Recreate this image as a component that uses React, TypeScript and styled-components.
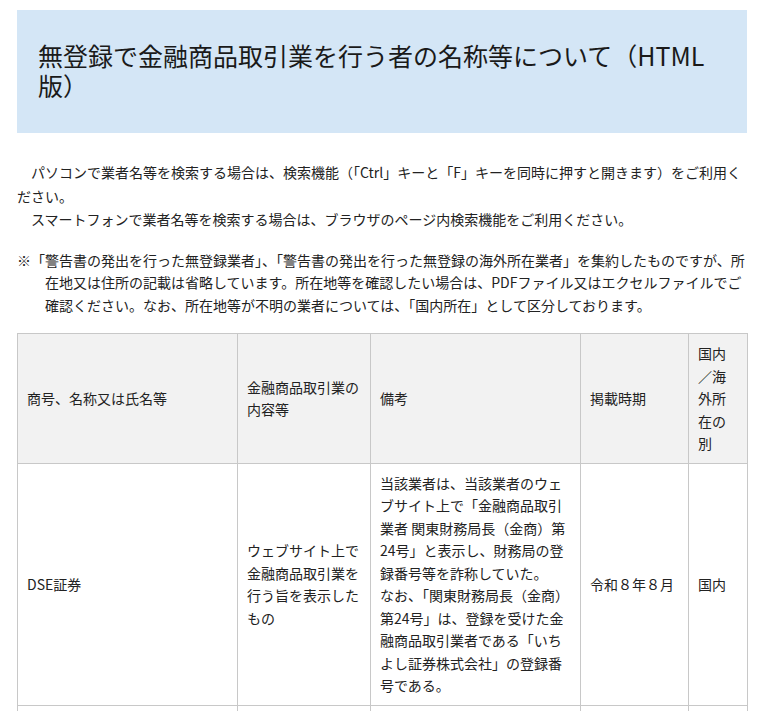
import React from "react";
import styled, { createGlobalStyle } from "styled-components";

const GlobalStyle = createGlobalStyle`
  html, body {
    margin: 0;
    padding: 0;
    background: #ffffff;
  }
  body {
    font-family: "Noto Sans CJK JP", "Liberation Sans", sans-serif;
    color: #222222;
    font-size: 14px;
  }
`;

const Page = styled.main`
  width: 730px;
  padding: 10px 24px 0 17px;
`;

const TitleBox = styled.h1`
  margin: 0;
  background: #d4e6f6;
  padding: 30px 12px 33px 21px;
  font-size: 25px;
  line-height: 30px;
  font-weight: normal;
  color: #1a1a1a;
`;

const Lead = styled.section`
  margin-top: 28px;
`;

const Para = styled.p`
  margin: 0;
  font-size: 14px;
  line-height: 23.5px;
`;

const Note = styled.p`
  margin: 17px 0 0;
  padding-left: 2em;
  text-indent: -2em;
  font-size: 14px;
  line-height: 22.5px;
`;

const Table = styled.table`
  margin-top: 17px;
  width: 730px;
  border-collapse: collapse;
  table-layout: fixed;
`;

const Col = styled.col<{ $w: number }>`
  width: ${(p) => p.$w}px;
`;

const HeadCell = styled.th`
  background: #f2f2f2;
  border: 1px solid #c8c8c8;
  padding: 8px 9px;
  font-weight: normal;
  text-align: left;
  vertical-align: middle;
  font-size: 14px;
  line-height: 22.5px;
`;

const Cell = styled.td`
  border: 1px solid #c8c8c8;
  padding: 8px 9px;
  text-align: left;
  vertical-align: middle;
  font-size: 14px;
  line-height: 22.5px;
`;

const widths = [220, 133, 210, 108, 59];
const IDEO_SPACE = "\u3000";

export default function App() {
  return (
    <>
      <GlobalStyle />
      <Page>
        <TitleBox>無登録で金融商品取引業を行う者の名称等について（HTML版）</TitleBox>
        <Lead>
          <Para>
            {IDEO_SPACE +
              "パソコンで業者名等を検索する場合は、検索機能（「Ctrl」キーと「F」キーを同時に押すと開きます）をご利用ください。"}
          </Para>
          <Para>
            {IDEO_SPACE +
              "スマートフォンで業者名等を検索する場合は、ブラウザのページ内検索機能をご利用ください。"}
          </Para>
        </Lead>
        <Note>
          ※「警告書の発出を行った無登録業者」、「警告書の発出を行った無登録の海外所在業者」を集約したものですが、所在地又は住所の記載は省略しています。所在地等を確認したい場合は、PDFファイル又はエクセルファイルでご確認ください。なお、所在地等が不明の業者については、「国内所在」として区分しております。
        </Note>
        <Table>
          <colgroup>
            {widths.map((w, i) => (
              <Col key={i} $w={w} />
            ))}
          </colgroup>
          <thead>
            <tr>
              <HeadCell>商号、名称又は氏名等</HeadCell>
              <HeadCell>金融商品取引業の内容等</HeadCell>
              <HeadCell>備考</HeadCell>
              <HeadCell>掲載時期</HeadCell>
              <HeadCell>国内／海外所在の別</HeadCell>
            </tr>
          </thead>
          <tbody>
            <tr>
              <Cell>DSE証券</Cell>
              <Cell>ウェブサイト上で金融商品取引業を行う旨を表示したもの</Cell>
              <Cell>
                当該業者は、当該業者のウェブサイト上で「金融商品取引業者 関東財務局長（金商）第24号」と表示し、財務局の登録番号等を詐称していた。
                <br />
                なお、「関東財務局長（金商）第24号」は、登録を受けた金融商品取引業者である「いちよし証券株式会社」の登録番号である。
              </Cell>
              <Cell>令和８年８月</Cell>
              <Cell>国内</Cell>
            </tr>
            <tr>
              <Cell>&nbsp;</Cell>
              <Cell>&nbsp;</Cell>
              <Cell>&nbsp;</Cell>
              <Cell>&nbsp;</Cell>
              <Cell>&nbsp;</Cell>
            </tr>
          </tbody>
        </Table>
      </Page>
    </>
  );
}
